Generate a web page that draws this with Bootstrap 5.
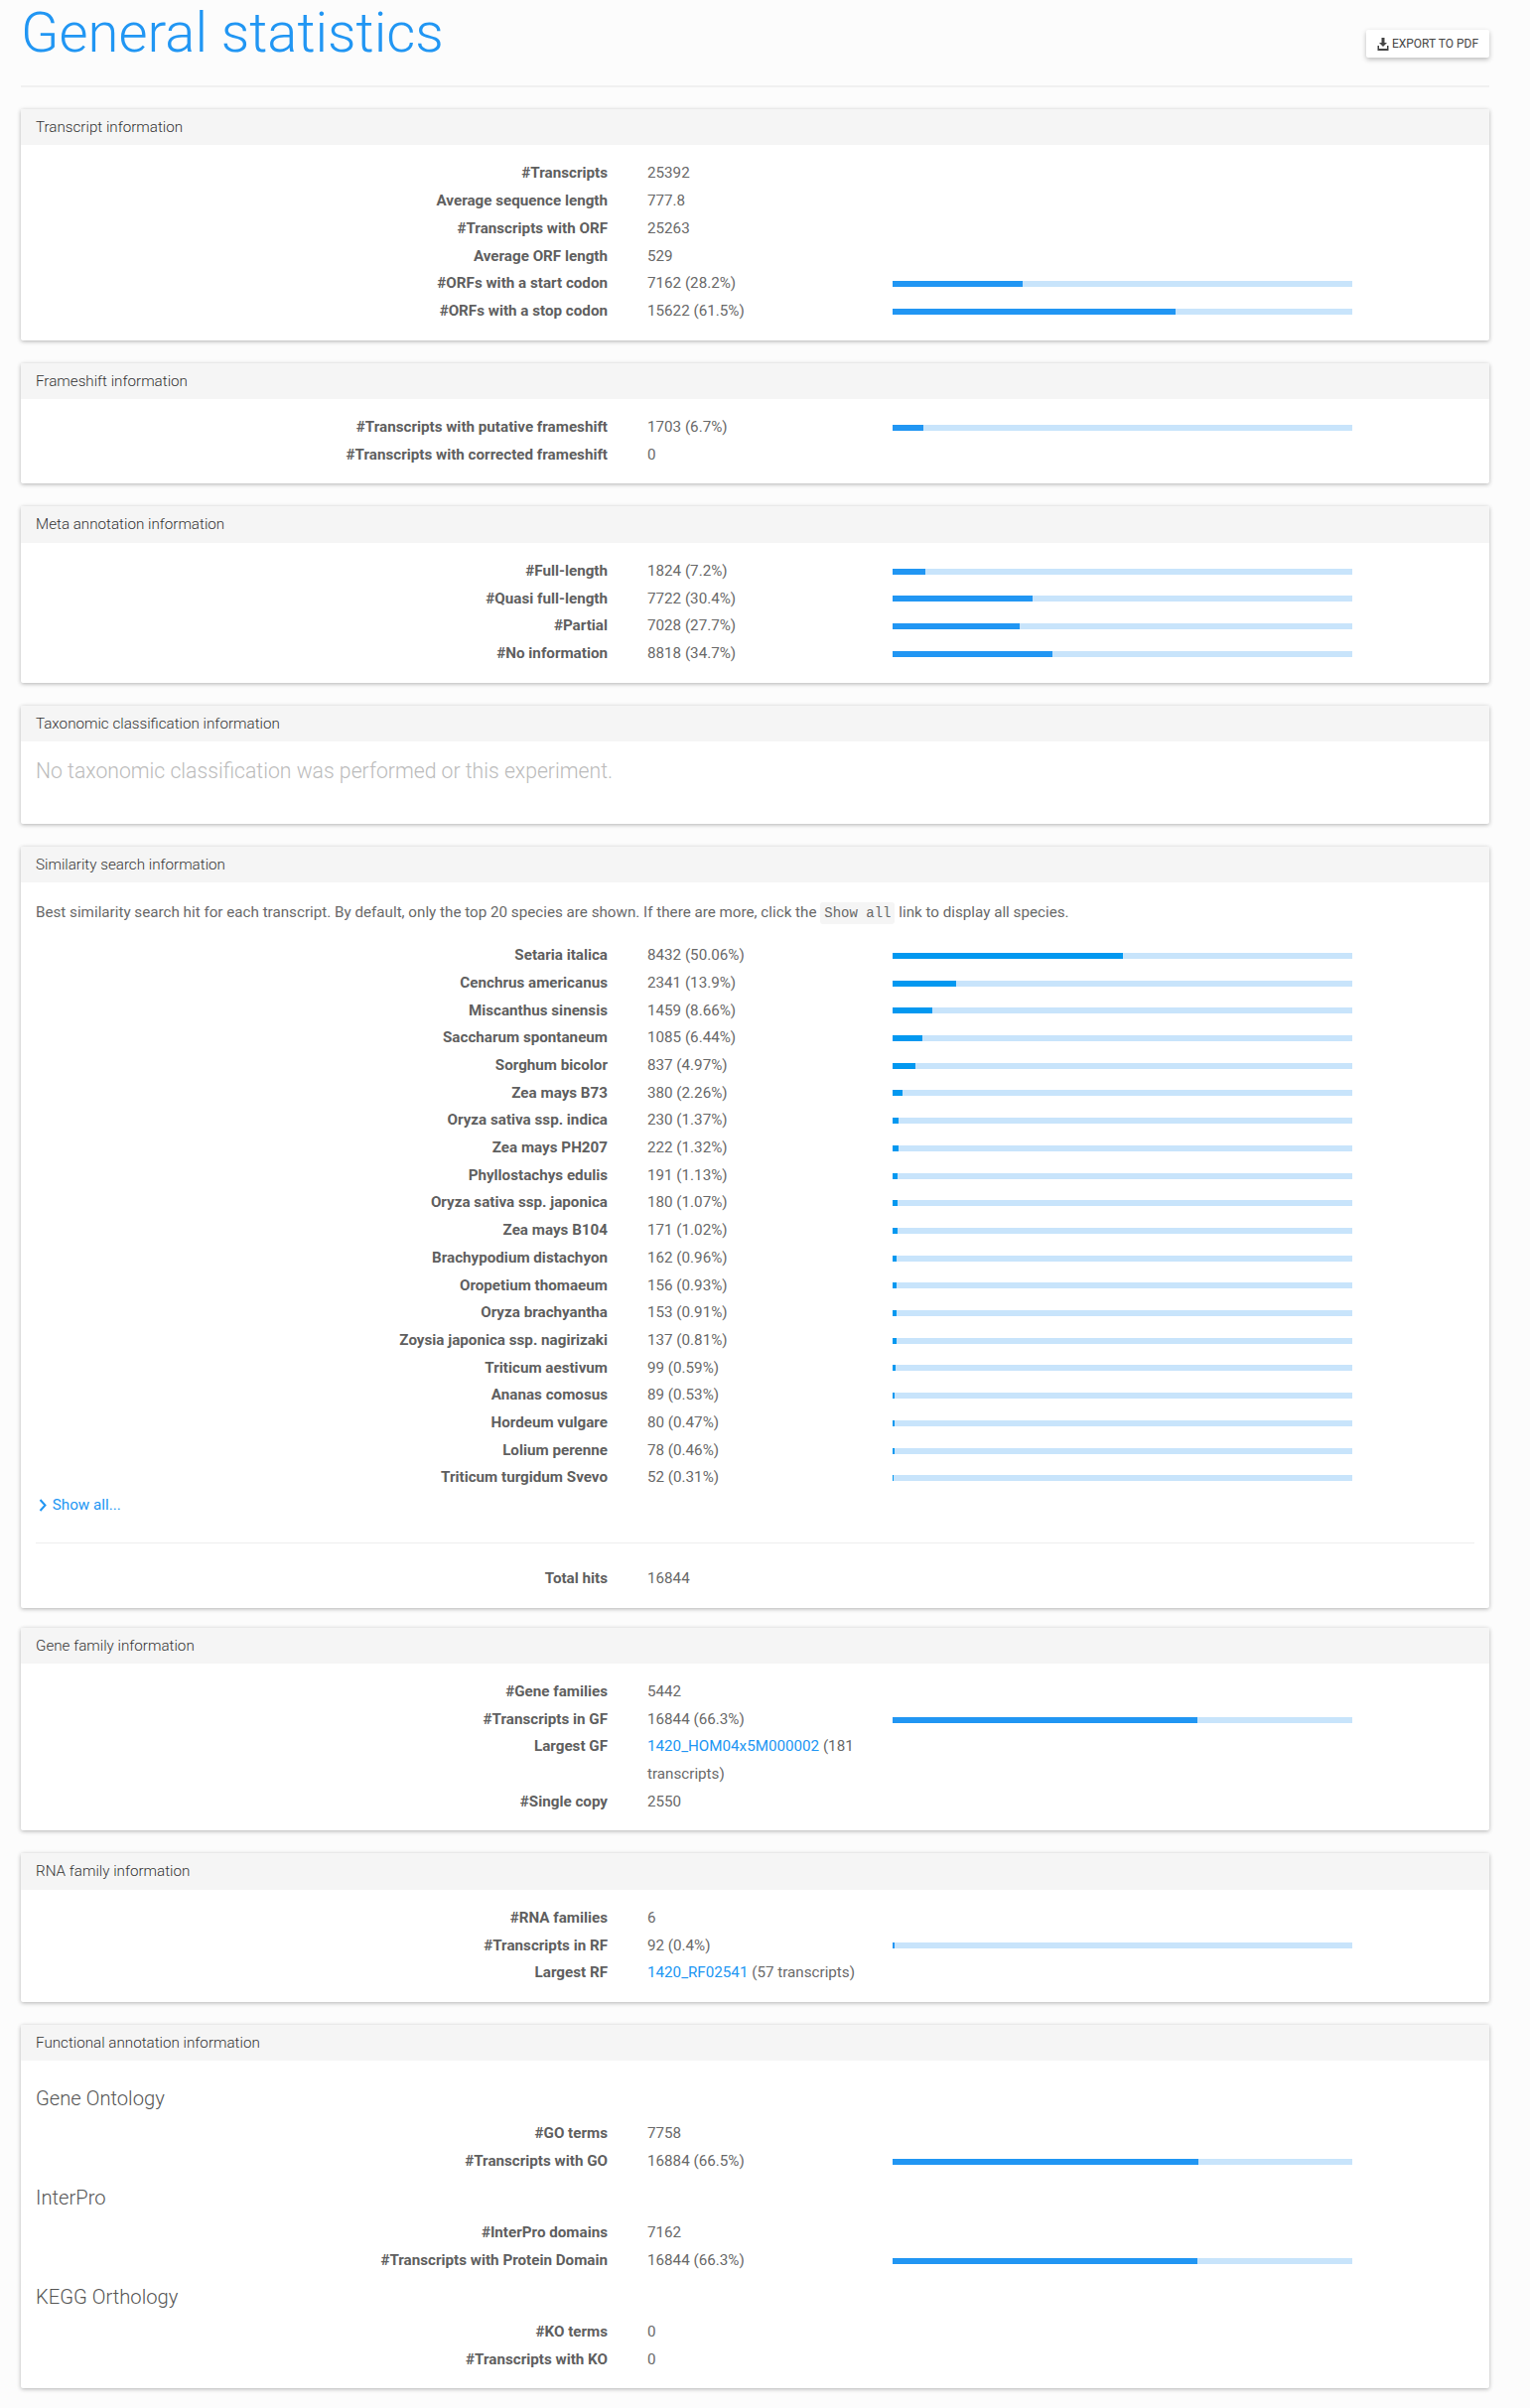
<!DOCTYPE html>
<html lang="en">
<head>
    <meta charset="UTF-8">
    <title>General statistics</title>
    <link href="https://cdn.jsdelivr.net/npm/bootstrap@5.3.3/dist/css/bootstrap.min.css" rel="stylesheet">
    <style>
        body {
            background: #fcfcfc;
            font-family: Roboto, "Liberation Sans", sans-serif;
            font-size: 15.2px;
            color: #696969;
            font-weight: 400;
        }
        a { color: #2196f3; text-decoration: none; }
        .page-wrap { padding: 0 41px 0 21px; }
        .page-head {
            height: 88px;
            border-bottom: 2px solid #f0f0f0;
            margin-bottom: 22px;
        }
        .page-title {
            color: #2196f3;
            font-size: 56.2px;
            font-weight: 300;
            line-height: 66px;
            margin: 0;
        }
        .btn-export {
            margin-top: 30px;
            height: 28px;
            width: 124px;
            padding: 0;
            background: #fff;
            border: 0;
            border-radius: 2px;
            color: #444;
            font-size: 12px;
            font-weight: 400;
            box-shadow: 0 2px 5px rgba(0,0,0,.26);
        }
        .btn-export svg { width: 12px; height: 13px; margin-right: 3px; }
        .stat-panel {
            background: #fff;
            border: 0;
            border-radius: 2px;
            box-shadow: 0 1px 4px rgba(0,0,0,.3);
            margin-bottom: 23px;
        }
        .stat-panel.tight { margin-bottom: 20px; }
        .stat-head {
            background: #f5f5f5;
            height: 36.4px;
            line-height: 37px;
            padding: 0 15px;
            color: #333;
            font-weight: 300;
        }
        .stat-body { padding: 15px; }
        .stat-row {
            display: grid;
            grid-template-columns: 576px 287px 463px;
            line-height: 27.7px;
        }
        .stat-row > b { text-align: right; font-weight: 700; color: #5f5f5f; }
        .stat-row > span { padding: 0 20px 0 40px; }
        .stat-bar {
            align-self: center;
            height: 6px;
            background: #c8e4fb;
        }
        .stat-fill { height: 100%; background: #2196f3; }
        .blue-fill .stat-fill { background: #0398f0; }
        .empty-note { color: #bbb; font-size: 21.2px; font-weight: 300; line-height: 30px; margin: 0 0 23px; }
        .sub-title { color: #555; font-size: 20.2px; font-weight: 300; line-height: 30px; margin: 7.3px 0; }
        .intro { margin: 2px 0 14px; line-height: 27.7px; }
        .intro code {
            background: #f5f5f5;
            border-radius: 3px;
            color: #696969;
            font-family: "Liberation Mono", monospace;
            font-size: 14px;
            padding: 3px 4px;
        }
        .show-link { display: block; line-height: 27.7px; }
        .show-link svg { width: 12px; height: 13px; margin-right: 1px; vertical-align: -2px; }
        .rule { border-top: 1px solid #eee; margin: 23px 0 22px; opacity: 1; }
    </style>
</head>
<body>
    <div class="page-wrap" id="app"></div>

    <script>
        const panels = [
            { title: 'Transcript information', rows: [
                ['#Transcripts', '25392'],
                ['Average sequence length', '777.8'],
                ['#Transcripts with ORF', '25263'],
                ['Average ORF length', '529'],
                ['#ORFs with a start codon', '7162 (28.2%)', 28.2],
                ['#ORFs with a stop codon', '15622 (61.5%)', 61.5]
            ]},
            { title: 'Frameshift information', rows: [
                ['#Transcripts with putative frameshift', '1703 (6.7%)', 6.7],
                ['#Transcripts with corrected frameshift', '0']
            ]},
            { title: 'Meta annotation information', rows: [
                ['#Full-length', '1824 (7.2%)', 7.2],
                ['#Quasi full-length', '7722 (30.4%)', 30.4],
                ['#Partial', '7028 (27.7%)', 27.7],
                ['#No information', '8818 (34.7%)', 34.7]
            ]},
            { title: 'Taxonomic classification information', html: '<p class="empty-note">No taxonomic classification was performed or this experiment.</p>' },
            { title: 'Similarity search information', species: true, tight: true },
            { title: 'Gene family information', rows: [
                ['#Gene families', '5442'],
                ['#Transcripts in GF', '16844 (66.3%)', 66.3],
                ['Largest GF', '<a href="#">1420_HOM04x5M000002</a> (181 transcripts)'],
                ['#Single copy', '2550']
            ]},
            { title: 'RNA family information', rows: [
                ['#RNA families', '6'],
                ['#Transcripts in RF', '92 (0.4%)', 0.4],
                ['Largest RF', '<a href="#">1420_RF02541</a> (57 transcripts)']
            ]},
            { title: 'Functional annotation information', groups: [
                ['Gene Ontology', [['#GO terms', '7758'], ['#Transcripts with GO', '16884 (66.5%)', 66.5]]],
                ['InterPro', [['#InterPro domains', '7162'], ['#Transcripts with Protein Domain', '16844 (66.3%)', 66.3]]],
                ['KEGG Orthology', [['#KO terms', '0'], ['#Transcripts with KO', '0']]]
            ]}
        ];

        const species = [
            ['Setaria italica', 8432, '50.06'], ['Cenchrus americanus', 2341, '13.9'],
            ['Miscanthus sinensis', 1459, '8.66'], ['Saccharum spontaneum', 1085, '6.44'],
            ['Sorghum bicolor', 837, '4.97'], ['Zea mays B73', 380, '2.26'],
            ['Oryza sativa ssp. indica', 230, '1.37'], ['Zea mays PH207', 222, '1.32'],
            ['Phyllostachys edulis', 191, '1.13'], ['Oryza sativa ssp. japonica', 180, '1.07'],
            ['Zea mays B104', 171, '1.02'], ['Brachypodium distachyon', 162, '0.96'],
            ['Oropetium thomaeum', 156, '0.93'], ['Oryza brachyantha', 153, '0.91'],
            ['Zoysia japonica ssp. nagirizaki', 137, '0.81'], ['Triticum aestivum', 99, '0.59'],
            ['Ananas comosus', 89, '0.53'], ['Hordeum vulgare', 80, '0.47'],
            ['Lolium perenne', 78, '0.46'], ['Triticum turgidum Svevo', 52, '0.31']
        ];

        function row(r) {
            const bar = r[2] !== undefined
                ? `<div class="stat-bar"><div class="stat-fill" style="width:${r[2]}%"></div></div>` : '';
            return `<div class="stat-row"><b>${r[0]}</b><span>${r[1]}</span>${bar}</div>`;
        }

        function body(p) {
            if (p.html) return p.html;
            if (p.rows) return p.rows.map(row).join('');
            if (p.groups) return p.groups.map(g => `<h4 class="sub-title">${g[0]}</h4>` + g[1].map(row).join('')).join('');
            return `<p class="intro">Best similarity search hit for each transcript. By default, only the top 20 species are shown. If there are more, click the <code>Show all</code> link to display all species.</p>
                <div class="blue-fill">${species.map(s => row([s[0], `${s[1]} (${s[2]}%)`, parseFloat(s[2])])).join('')}</div>
                <a class="show-link" href="#"><svg viewBox="0 0 12 13" fill="none" stroke="#2196f3" stroke-width="2"><path d="M4.500 1l5 5.500-5 5.500"/></svg> Show all...</a>
                <hr class="rule">` + row(['Total hits', '16844']);
        }

        let html = `<div class="d-flex justify-content-between page-head">
            <h1 class="page-title">General statistics</h1>
            <button type="button" class="btn btn-export d-flex align-items-center justify-content-center"><svg viewBox="0 0 12 13" fill="#444"><path d="M4.500 0h3v5H10L6 9 2 5h2.500zM.5 8h1.500v3h8V8h1.500v5H.5z"/></svg>EXPORT TO PDF</button>
        </div>`;
        panels.forEach(p => {
            html += `<div class="card stat-panel${p.tight ? ' tight' : ''}"><div class="stat-head">${p.title}</div><div class="stat-body">${body(p)}</div></div>`;
        });
        document.getElementById('app').innerHTML = html;
    </script>

    <script src="https://cdn.jsdelivr.net/npm/bootstrap@5.3.3/dist/js/bootstrap.bundle.min.js"></script>
</body>
</html>
